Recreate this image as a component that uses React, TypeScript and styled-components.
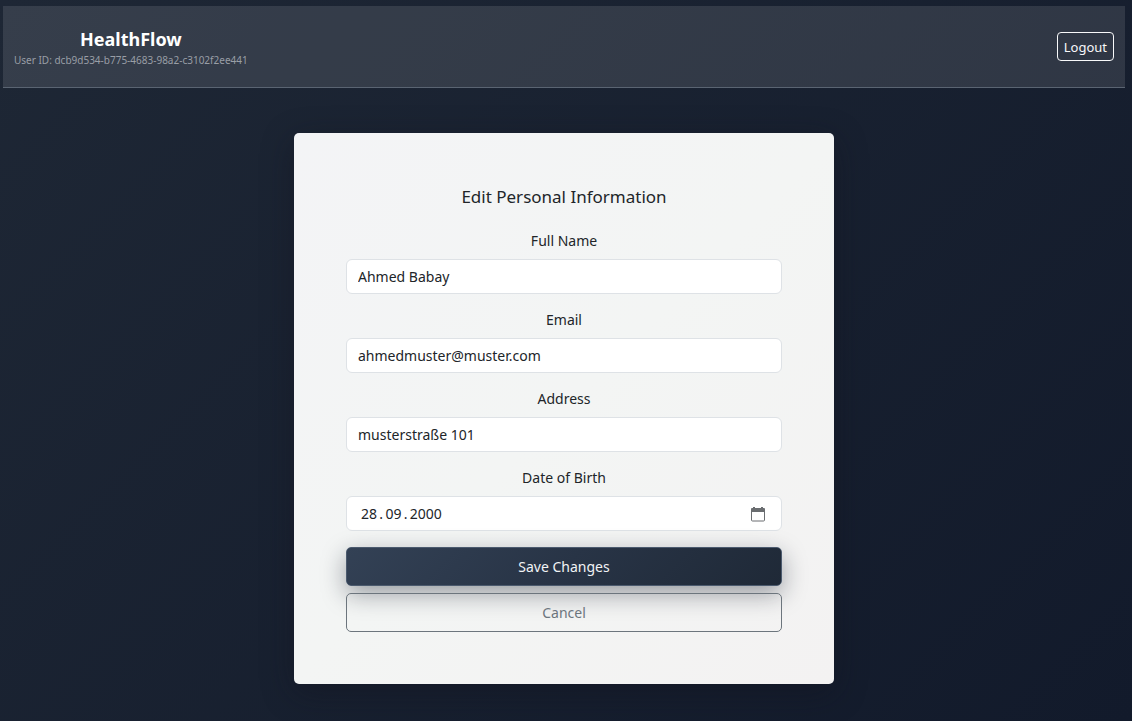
import React, { useState } from "react";
import styled, { createGlobalStyle } from "styled-components";

const GlobalStyle = createGlobalStyle`
  *, *::before, *::after { box-sizing: border-box; }
  html { min-height: 100%; background: #111827; }
  body {
    margin: 0;
    min-height: 100vh;
    background: linear-gradient(135deg, #1e2735 0%, #121a2b 100%);
    font-family: "Segoe UI", "Noto Sans", sans-serif;
    font-size: 14px;
    line-height: 22px;
    color: #212529;
  }
`;

const Page = styled.div`
  display: flex;
  flex-direction: column;
  padding: 6px 7px 36px 3px;
`;

const Header = styled.header`
  display: flex;
  align-items: center;
  justify-content: space-between;
  padding: 18px 11px;
  background: rgba(255, 255, 255, 0.11);
  border-bottom: 1px solid #5a6472;
`;

const Brand = styled.div`
  display: flex;
  flex-direction: column;
  align-items: center;
  gap: 1px;
  padding-top: 3px;
`;

const BrandName = styled.h1`
  margin: 0;
  font-size: 18px;
  line-height: 24px;
  font-weight: 700;
  color: #ffffff;
`;

const UserId = styled.small`
  font-size: 10px;
  line-height: 17px;
  color: #999ea6;
`;

const LogoutButton = styled.button`
  height: 29px;
  padding: 0 6px;
  border: 1px solid #f8f9fa;
  border-radius: 4px;
  background: transparent;
  color: #f8f9fa;
  font: inherit;
  font-size: 13px;
  cursor: pointer;
`;

const Main = styled.main`
  display: flex;
  justify-content: center;
  padding-top: 45px;
`;

const Card = styled.form`
  width: 100%;
  max-width: 540px;
  padding: 52px;
  display: flex;
  flex-direction: column;
  border-radius: 5px;
  background: linear-gradient(135deg, #f3f4f6 0%, #f3f5f4 50%, #f3f2f2 100%);
  box-shadow: 0 8px 32px rgba(17, 17, 28, 0.4);
`;

const Title = styled.h2`
  margin: 0 0 21px;
  font-size: 17px;
  line-height: 24px;
  font-weight: 400;
  text-align: center;
`;

const Fields = styled.div`
  display: flex;
  flex-direction: column;
  gap: 15px;
  margin-bottom: 16px;
`;

const Field = styled.div`
  display: flex;
  flex-direction: column;
  gap: 7px;
`;

const Label = styled.label`
  text-align: center;
`;

const InputBox = styled.div<{ $picker?: boolean }>`
  display: flex;
  align-items: center;
  height: 35px;
  padding: 0 15px 0 ${(p) => (p.$picker ? 14 : 11)}px;
  border: 1px solid #dee2e6;
  border-radius: 6px;
  background: #ffffff;
`;

const Input = styled.input`
  flex: 1;
  min-width: 0;
  padding: 0;
  border: 0;
  outline: 0;
  background: transparent;
  color: #212529;
  font: inherit;
`;

const PickerButton = styled.button`
  display: flex;
  padding: 0;
  border: 0;
  background: transparent;
  color: #6a6d70;
  cursor: pointer;
`;

const Actions = styled.div`
  display: flex;
  flex-direction: column;
  gap: 7px;
`;

const ActionButton = styled.button<{ $primary?: boolean }>`
  height: 39px;
  border-radius: 5px;
  border: 1px solid ${(p) => (p.$primary ? "#4b5a6e" : "#6c757d")};
  background: ${(p) =>
    p.$primary ? "linear-gradient(135deg, #334155 0%, #283446 50%, #1f2937 100%)" : "transparent"};
  box-shadow: ${(p) => (p.$primary ? "0 8px 24px rgba(17, 24, 39, 0.4)" : "none")};
  color: ${(p) => (p.$primary ? "#f1f3f5" : "#6c757d")};
  font: inherit;
  cursor: pointer;
`;

function CalendarIcon() {
  return (
    <svg width="16" height="16" viewBox="0 0 16 16" fill="none" aria-hidden="true">
      <path d="M2 2h12a1 1 0 0 1 1 1v3H1V3a1 1 0 0 1 1-1zM3 1h2v2H3zM11 1h2v2h-2z" fill="currentColor" />
      <path d="M1.5 4v10a1 1 0 0 0 1 1h11a1 1 0 0 0 1-1V4" stroke="currentColor" />
    </svg>
  );
}

const fields = [
  { id: "name", label: "Full Name", type: "text", value: "Ahmed Babay" },
  { id: "email", label: "Email", type: "email", value: "ahmedmuster@muster.com" },
  { id: "address", label: "Address", type: "text", value: "musterstraße 101" },
  { id: "birth", label: "Date of Birth", type: "text", value: "28\u2009.\u200909\u2009.\u20092000", picker: true },
];

export default function App() {
  const [values, setValues] = useState<Record<string, string>>(
    Object.fromEntries(fields.map((f) => [f.id, f.value]))
  );

  return (
    <>
      <GlobalStyle />
      <Page>
        <Header>
          <Brand>
            <BrandName>HealthFlow</BrandName>
            <UserId>User ID: dcb9d534-b775-4683-98a2-c3102f2ee441</UserId>
          </Brand>
          <LogoutButton type="button">Logout</LogoutButton>
        </Header>
        <Main>
          <Card onSubmit={(e) => e.preventDefault()}>
            <Title>Edit Personal Information</Title>
            <Fields>
              {fields.map((f) => (
                <Field key={f.id}>
                  <Label htmlFor={f.id}>{f.label}</Label>
                  <InputBox $picker={f.picker}>
                    <Input
                      id={f.id}
                      type={f.type}
                      spellCheck={false}
                      value={values[f.id]}
                      onChange={(e) => setValues({ ...values, [f.id]: e.target.value })}
                    />
                    {f.picker && (
                      <PickerButton type="button" aria-label="Choose date">
                        <CalendarIcon />
                      </PickerButton>
                    )}
                  </InputBox>
                </Field>
              ))}
            </Fields>
            <Actions>
              <ActionButton $primary type="submit">Save Changes</ActionButton>
              <ActionButton type="button">Cancel</ActionButton>
            </Actions>
          </Card>
        </Main>
      </Page>
    </>
  );
}
